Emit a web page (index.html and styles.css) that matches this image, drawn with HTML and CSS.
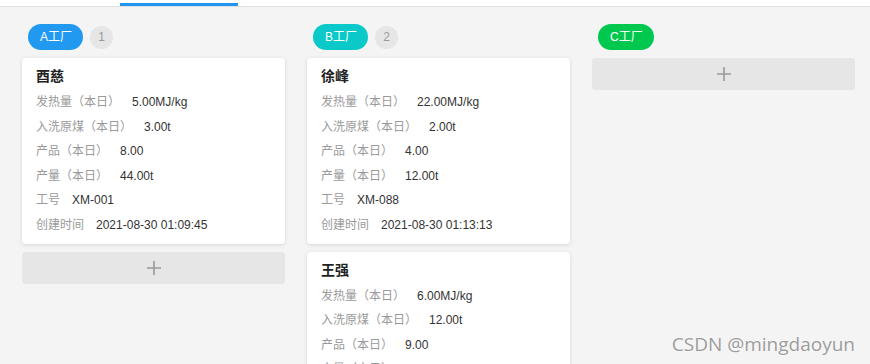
FILE: index.html
```html
<!DOCTYPE html>
<html lang="zh-CN">
<head>
    <meta charset="UTF-8">
    <title>工厂看板</title>
    <link rel="stylesheet" href="styles.css">
</head>
<body>
    <div class="tabs">
        <div class="tab-active"></div>
    </div>

    <div class="board">
        <!-- A工厂 -->
        <div class="column">
            <div class="column-head">
                <span class="tag tag-a">A工厂</span>
                <span class="count">1</span>
            </div>
            <div class="card">
                <div class="card-name">酉慈</div>
                <div class="row"><span class="label">发热量（本日）</span><span class="value">5.00MJ/kg</span></div>
                <div class="row"><span class="label">入洗原煤（本日）</span><span class="value">3.00t</span></div>
                <div class="row"><span class="label">产品（本日）</span><span class="value">8.00</span></div>
                <div class="row"><span class="label">产量（本日）</span><span class="value">44.00t</span></div>
                <div class="row"><span class="label">工号</span><span class="value">XM-001</span></div>
                <div class="row"><span class="label">创建时间</span><span class="value">2021-08-30 01:09:45</span></div>
            </div>
            <div class="add-btn">
                <svg width="14" height="14" viewBox="0 0 14 14"><path d="M7 0V14M0 7H14" stroke="#999" stroke-width="1.6"/></svg>
            </div>
        </div>

        <!-- B工厂 -->
        <div class="column">
            <div class="column-head">
                <span class="tag tag-b">B工厂</span>
                <span class="count">2</span>
            </div>
            <div class="card">
                <div class="card-name">徐峰</div>
                <div class="row"><span class="label">发热量（本日）</span><span class="value">22.00MJ/kg</span></div>
                <div class="row"><span class="label">入洗原煤（本日）</span><span class="value">2.00t</span></div>
                <div class="row"><span class="label">产品（本日）</span><span class="value">4.00</span></div>
                <div class="row"><span class="label">产量（本日）</span><span class="value">12.00t</span></div>
                <div class="row"><span class="label">工号</span><span class="value">XM-088</span></div>
                <div class="row"><span class="label">创建时间</span><span class="value">2021-08-30 01:13:13</span></div>
            </div>
            <div class="card">
                <div class="card-name">王强</div>
                <div class="row"><span class="label">发热量（本日）</span><span class="value">6.00MJ/kg</span></div>
                <div class="row"><span class="label">入洗原煤（本日）</span><span class="value">12.00t</span></div>
                <div class="row"><span class="label">产品（本日）</span><span class="value">9.00</span></div>
                <div class="row"><span class="label">产量（本日）</span><span class="value">30.00t</span></div>
            </div>
        </div>

        <!-- C工厂 -->
        <div class="column">
            <div class="column-head">
                <span class="tag tag-c">C工厂</span>
            </div>
            <div class="add-btn">
                <svg width="14" height="14" viewBox="0 0 14 14"><path d="M7 0V14M0 7H14" stroke="#999" stroke-width="1.6"/></svg>
            </div>
        </div>
    </div>

    <div class="watermark">CSDN @mingdaoyun</div>
</body>
</html>
```

FILE: styles.css
```css
:root {
    --bg-color: #f4f4f4;
    --card-bg: #ffffff;
    --label-color: #9a9a9a;
    --value-color: #333333;
    --btn-bg: #e6e6e6;
    --line-color: #e0e0e0;
    --accent-color: #2196f3;
}

html, body {
    height: 100%;
}

body {
    font-family: "Liberation Sans", "Noto Sans CJK SC", Arial, sans-serif;
    margin: 0;
    padding: 0;
    background-color: var(--bg-color);
    color: var(--value-color);
    overflow: hidden;
    position: relative;
}

.tabs {
    height: 6px;
    background-color: #ffffff;
    border-bottom: 1px solid var(--line-color);
    display: flex;
}

.tab-active {
    margin-left: 120px;
    margin-top: 3px;
    width: 118px;
    height: 3px;
    background-color: var(--accent-color);
}

.board {
    display: flex;
    gap: 22px;
    padding: 0 22px;
}

.column {
    width: 263px;
    flex-shrink: 0;
    display: flex;
    flex-direction: column;
    gap: 8px;
}

.column-head {
    display: flex;
    align-items: center;
    padding: 17px 0 0 6px;
    height: 26px;
}

.tag {
    height: 26px;
    line-height: 26px;
    padding: 0 11px 0 12px;
    border-radius: 13px;
    color: #ffffff;
    font-size: 12px;
}

.tag-a {
    background-color: #2299f1;
}

.tag-b {
    background-color: #0bc9c9;
}

.tag-c {
    background-color: #00c84e;
}

.count {
    width: 23px;
    height: 23px;
    line-height: 23px;
    margin-left: 7px;
    border-radius: 50%;
    background-color: #e6e6e6;
    color: #999999;
    font-size: 12px;
    text-align: center;
}

.card {
    background-color: var(--card-bg);
    border-radius: 4px;
    padding: 9px 14px 6px;
    box-shadow: 0 1px 4px rgba(0, 0, 0, 0.12);
}

.card-name {
    font-size: 14px;
    font-weight: 700;
    line-height: 18px;
    margin-bottom: 5px;
    color: #222222;
}

.row {
    font-size: 12px;
    line-height: 24.6px;
    display: flex;
    gap: 12px;
    white-space: nowrap;
}

.label {
    color: var(--label-color);
}

.value {
    color: var(--value-color);
}

.add-btn {
    height: 32px;
    border-radius: 3px;
    background-color: var(--btn-bg);
    display: flex;
    align-items: center;
    justify-content: center;
    cursor: pointer;
}

.watermark {
    position: absolute;
    right: 15px;
    bottom: 7px;
    font-family: "Open Sans", sans-serif;
    font-size: 19px;
    color: #9c9c9c;
    text-shadow: 0 0 2px #ffffff;
}
```
